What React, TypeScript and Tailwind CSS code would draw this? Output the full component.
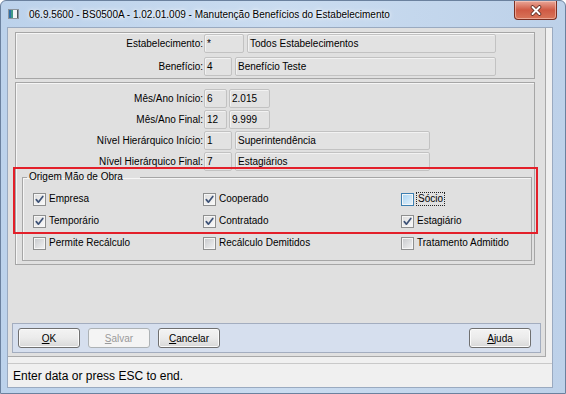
import React from "react";

const ui = "font-['Liberation_Sans',Arial,sans-serif]";

function Field({ className, value }: { className: string; value?: string }) {
  return (
    <div
      className={`${className} h-[19px] shrink-0 border border-[#c2c2c2] rounded-[2px] bg-[#e2e2e2] shadow-[inset_1px_1px_0_#f2f2f2] px-[2px] flex items-center text-[10px] text-black whitespace-nowrap overflow-hidden`}
    >
      {value}
    </div>
  );
}

function Row({ label, gap, children }: { label: string; gap: string; children: React.ReactNode }) {
  return (
    <div className="flex items-center h-[19px]">
      <div className="w-[187px] text-right text-[10px] whitespace-nowrap">{label}</div>
      <div className={`ml-[1px] flex ${gap}`}>{children}</div>
    </div>
  );
}

function Check({ state, label, focus }: { state: "on" | "off" | "hover"; label: string; focus?: boolean }) {
  const box =
    state === "hover"
      ? "border-[#3c7fb1] bg-gradient-to-br from-[#a9d4f2] to-[#e6f3fc]"
      : state === "on"
      ? "border-[#8e8f8f] bg-gradient-to-br from-[#dcdcdc] to-[#fbfbfb]"
      : "border-[#8e8f8f] bg-gradient-to-br from-[#c6c8cb] to-[#f3f3f3]";

  return (
    <div className="flex items-center h-[20px]">
      <div className={`w-[13px] h-[13px] shrink-0 border ${box} shadow-[inset_0_0_0_1px_#f6f6f6] flex items-center justify-center`}>
        {state === "on" && (
          <svg width="11" height="11" viewBox="0 0 11 11">
            <path d="M2.3 5.6 L4.4 8.2 L8.8 2.4" fill="none" stroke="#3d5277" strokeWidth="1.7" strokeLinecap="round" strokeLinejoin="round" />
          </svg>
        )}
      </div>
      {focus ? (
        <span className="ml-[2px] border border-dotted border-[#222] px-[1px] text-[10px] leading-[12px]">{label}</span>
      ) : (
        <span className="ml-[3px] text-[10px] leading-[12px]">{label}</span>
      )}
    </div>
  );
}

function Btn({ k, rest, disabled, className }: { k: string; rest: string; disabled?: boolean; className?: string }) {
  return (
    <div
      className={`${className ?? ""} w-[62px] h-[20px] rounded-[3px] border flex items-center justify-center text-[10px] ${
        disabled
          ? "border-[#adb2b5] bg-[#f4f4f4] text-[#9a9a9a]"
          : "border-[#707070] bg-gradient-to-b from-[#f3f3f3] via-[#ebebeb] to-[#d8d8d8] shadow-[inset_0_0_0_1px_#fbfbfb] text-black"
      }`}
    >
      <span className="underline">{k}</span>
      {rest}
    </div>
  );
}

export default function App() {
  return (
    <div className={`${ui} w-[566px] h-[394px] flex flex-col border border-[#6b819e] rounded-t-[6px] overflow-hidden bg-gradient-to-r from-[#bcd2eb] via-[#cadcf0] to-[#bdd1e9] text-black`}>
      {/* title bar */}
      <div className="h-[26px] shrink-0 flex items-center">
        <svg className="ml-[7px]" width="11" height="10" viewBox="0 0 11 10">
          <rect x="0.5" y="0.5" width="10" height="9" fill="#f2f4f6" stroke="#8c949c" />
          <rect x="1" y="1" width="4" height="8" fill="#3f9a86" />
          <rect x="1" y="1" width="2" height="8" fill="#2f6fa8" />
          <rect x="9" y="1" width="1" height="8" fill="#4d5660" />
        </svg>
        <div className="ml-[10px] text-[10px] whitespace-nowrap [text-shadow:0_0_6px_#fff,0_0_3px_#fff]">
          06.9.5600 - BS0500A - 1.02.01.009 - Manutenção Benefícios do Estabelecimento
        </div>
        <div className="ml-auto mr-[8px] self-start w-[43px] h-[19px] rounded-b-[4px] border border-[#7a2f22] border-t-0 bg-gradient-to-b from-[#e8a698] via-[#cf5a44] to-[#d8755a] shadow-[inset_0_0_0_1px_rgba(255,220,210,0.5)] flex items-center justify-center">
          <svg width="12" height="11" viewBox="0 0 12 11">
            <path d="M2.5 2 L9.5 9 M9.5 2 L2.5 9" stroke="#5a2a22" strokeWidth="3.6" strokeLinecap="round" />
            <path d="M2.5 2 L9.5 9 M9.5 2 L2.5 9" stroke="#ffffff" strokeWidth="2" strokeLinecap="round" />
          </svg>
        </div>
      </div>

      <div className="flex flex-1">
        <div className="w-[6px] shrink-0" />

        {/* client */}
        <div className="w-[546px] shrink-0 border border-[#9aaac0] bg-[#f0f0f0] flex flex-col">
          {/* form area */}
          <div className="relative w-[538px] h-[329px] shrink-0 bg-[#e0e0e0] border-r border-b border-[#a9a9a9] flex flex-col">
            {/* panel 1 */}
            <div className="ml-[7px] mt-[4px] w-[520px] h-[47px] border border-[#a6a6a6] shadow-[inset_1px_1px_0_#f6f6f6] pt-[1px] flex flex-col gap-[4px]">
              <Row label="Estabelecimento:" gap="gap-[3px]">
                <Field className="w-[40px]" value="*" />
                <Field className="w-[249px]" value="Todos Estabelecimentos" />
              </Row>
              <Row label="Benefício:" gap="gap-[3px]">
                <Field className="w-[28px]" value="4" />
                <Field className="w-[261px]" value="Benefício Teste" />
              </Row>
            </div>

            {/* panel 2 */}
            <div className="ml-[7px] mt-[3px] w-[520px] h-[183px] border border-[#a6a6a6] shadow-[inset_1px_1px_0_#f6f6f6] pt-[6px] flex flex-col">
              <div className="flex flex-col gap-[2px]">
                <Row label="Mês/Ano Início:" gap="gap-[2px]">
                  <Field className="w-[23px]" value="6" />
                  <Field className="w-[41px]" value="2.015" />
                </Row>
                <Row label="Mês/Ano Final:" gap="gap-[2px]">
                  <Field className="w-[23px]" value="12" />
                  <Field className="w-[41px]" value="9.999" />
                </Row>
                <Row label="Nível Hierárquico Início:" gap="gap-[3px]">
                  <Field className="w-[28px]" value="1" />
                  <Field className="w-[195px]" value="Superintendência" />
                </Row>
                <Row label="Nível Hierárquico Final:" gap="gap-[3px]">
                  <Field className="w-[28px]" value="7" />
                  <Field className="w-[195px]" value="Estagiários" />
                </Row>
              </div>

              <fieldset className="ml-[6px] w-[510px] h-[90px] border border-[#a6a6a6] shadow-[inset_1px_1px_0_#f6f6f6] p-0 m-0 min-w-0">
                <legend className="ml-[4px] w-[113px] pl-[2px] text-[10px] leading-[12px] whitespace-nowrap">Origem Mão de Obra</legend>
                <div className="pt-[6px] pl-[10px] grid grid-cols-[170px_198px_1fr] gap-y-[2px]">
                  <Check state="on" label="Empresa" />
                  <Check state="on" label="Cooperado" />
                  <Check state="hover" label="Sócio" focus />
                  <Check state="on" label="Temporário" />
                  <Check state="on" label="Contratado" />
                  <Check state="on" label="Estagiário" />
                  <Check state="off" label="Permite Recálculo" />
                  <Check state="off" label="Recálculo Demitidos" />
                  <Check state="off" label="Tratamento Admitido" />
                </div>
              </fieldset>
            </div>

            {/* button bar */}
            <div className="ml-[4px] mt-[58px] w-[529px] h-[30px] border border-[#a3adbf] bg-[#d6dfee] flex items-center pl-[5px]">
              <Btn k="O" rest="K" />
              <Btn k="S" rest="alvar" disabled className="ml-[8px]" />
              <Btn k="C" rest="ancelar" className="ml-[8px]" />
              <Btn k="A" rest="juda" className="ml-auto mr-[9px]" />
            </div>

            {/* highlight */}
            <div className="absolute left-[5px] top-[139px] w-[525px] h-[67px] border-2 border-[#e3202a] pointer-events-none" />
          </div>

          <div className="h-[6px] shrink-0" />

          {/* status bar */}
          <div className="flex-1 border-t border-[#c9c9c9] bg-[#f0f0f0] flex items-center pl-[5px] text-[12px] whitespace-nowrap">
            Enter data or press ESC to end.
          </div>
        </div>

        <div className="flex-1" />
      </div>

      <div className="h-[5px] shrink-0" />
    </div>
  );
}
